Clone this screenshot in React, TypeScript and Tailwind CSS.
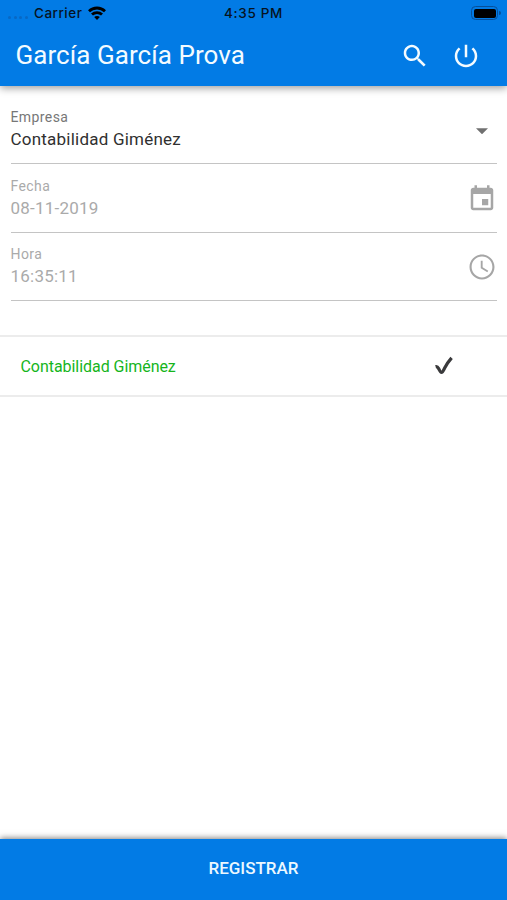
type FieldProps = {
  label: string;
  value: string;
  kind: "select" | "date" | "time";
};

function FieldIcon({ kind }: { kind: FieldProps["kind"] }) {
  if (kind === "select") {
    return (
      <svg viewBox="0 0 12 6" className="mt-[3px] mr-[8.5px] h-[6.5px] w-3" fill="#707070">
        <path d="M0 0h12L6 6z" />
      </svg>
    );
  }
  return (
    <svg viewBox="0 0 24 24" className="mt-[2px] -mr-[0.5px] size-[30px]" fill="#a6a6a6">
      {kind === "date" ? (
        <path d="M17 12h-5v5h5v-5zM16 1v2H8V1H6v2H5c-1.11 0-1.99.9-1.99 2L3 19c0 1.1.89 2 2 2h14c1.1 0 2-.9 2-2V5c0-1.1-.9-2-2-2h-1V1h-2zm3 18H5V8h14v11z" />
      ) : (
        <path d="M11.99 2C6.47 2 2 6.48 2 12s4.47 10 9.99 10C17.52 22 22 17.52 22 12S17.52 2 11.99 2zM12 20.3c-4.6 0-8.3-3.7-8.3-8.3s3.7-8.3 8.3-8.3 8.3 3.7 8.3 8.3-3.7 8.3-8.3 8.3zm.5-13.3H11v6l5.25 3.15.75-1.23-4.5-2.67V7z" />
      )}
    </svg>
  );
}

function Field({ label, value, kind }: FieldProps) {
  const active = kind === "select";
  return (
    <div className="flex h-[68.5px] items-center justify-between border-b border-[#c4c4c4]">
      <div className={active ? "text-[#303030]" : "text-[#aaaaaa]"}>
        <div
          className={`text-[14px] leading-[20px] tracking-[0.4px] ${active ? "text-[#777777]" : ""}`}
        >
          {label}
        </div>
        <div className="text-[17px] leading-6 tracking-[0.22px]">{value}</div>
      </div>
      <FieldIcon kind={kind} />
    </div>
  );
}

function StatusBar() {
  return (
    <div className="grid h-[26px] grid-cols-3 items-center font-[family-name:Inter] text-[13.5px] font-medium text-[#06131f]">
      <div className="flex items-center pl-2">
        <div className="mt-2 flex gap-[2.5px]">
          {[0, 1, 2, 3].map((i) => (
            <span key={i} className="size-[3px] rounded-full bg-[#0868c4]" />
          ))}
        </div>
        <span className="ml-[6.500px] w-[49px] tracking-[0.5px]">Carrier</span>
        <svg viewBox="0 0 18 14" className="ml-[5px] h-[14px] w-[18px]" fill="none" stroke="#000000" strokeWidth="2.8">
          <path d="M1 5.2C5.5.9 12.5.9 17 5.2" />
          <path d="M4 8.6c2.8-2.7 7.2-2.7 10 0" />
          <path d="M9 14 6.2 11.1c1.6-1.4 4-1.4 5.6 0z" fill="#000000" stroke="none" />
        </svg>
      </div>
      <div className="text-center tracking-[0.65px]">4:35 PM</div>
      <div className="flex items-center justify-end pr-[6px]">
        <div className="h-[14px] w-[27px] rounded-[4.5px] border border-[#07509a] p-[1.5px]">
          <div className="h-full rounded-[2px] bg-black" />
        </div>
        <div className="ml-px h-1 w-[2px] rounded-r-full bg-[#07509a]" />
      </div>
    </div>
  );
}

export default function App() {
  return (
    <div className="flex h-[900px] w-[507px] flex-col overflow-hidden bg-white font-['Roboto',sans-serif]">
      <header className="h-[86px] shrink-0 bg-[#027be5] shadow-[0_2px_8px_rgba(0,0,0,0.4)]">
        <StatusBar />
        <div className="flex h-[60px] items-center pr-[26px] pl-[15.5px] text-[#f4fbff]">
          <h1 className="flex-1 pb-[2px] text-[26px] leading-8 tracking-[0.06px]">García García Prova</h1>
          <svg viewBox="0 0 24 24" className="size-[30px]" fill="currentColor">
            <path d="M15.5 14h-.79l-.28-.27C15.41 12.59 16 11.11 16 9.5 16 5.91 13.09 3 9.5 3S3 5.91 3 9.5 5.91 16 9.5 16c1.61 0 3.09-.59 4.23-1.57l.27.28v.79l5 4.99L20.49 19l-4.99-5zm-6 0C7.01 14 5 11.99 5 9.5S7.01 5 9.5 5 14 7.01 14 9.5 11.99 14 9.5 14z" />
          </svg>
          <svg viewBox="0 0 24 24" className="ml-[21px] size-[30px]" fill="currentColor">
            <path d="M13 3h-2v10h2V3zm4.83 2.17-1.42 1.42C17.99 7.86 19 9.81 19 12c0 3.87-3.13 7-7 7s-7-3.13-7-7c0-2.19 1.01-4.14 2.58-5.42L6.17 5.17C4.23 6.82 3 9.26 3 12c0 4.97 4.03 9 9 9s9-4.03 9-9c0-2.74-1.23-5.18-3.17-6.83z" />
          </svg>
        </div>
      </header>

      <main className="flex-1">
        <form className="px-[10.5px] pt-[9.5px]">
          <Field label="Empresa" value="Contabilidad Giménez" kind="select" />
          <Field label="Fecha" value="08-11-2019" kind="date" />
          <Field label="Hora" value="16:35:11" kind="time" />
        </form>
        <div className="mt-[34px] flex h-[61.5px] items-center justify-between border-y-2 border-[#ececec] pr-[53px] pl-[20.5px]">
          <span className="mt-[2px] text-[16px] tracking-[-0.05px] text-[#16b51c]">Contabilidad Giménez</span>
          <svg viewBox="0 0 20 20" className="size-5" fill="none" stroke="#3a3a3c">
            <path d="M1.6 10.6c1.500-.4 2.300.5 3 1.900 1.100 2.200 1.600 3.900 2.900 3.900s2-2 3.300-4.600c1.700-3.400 4-6.700 6.800-9.900" strokeWidth="3.200" />
          </svg>
        </div>
      </main>

      <button className="h-[61px] shrink-0 bg-[#027be5] pb-[2px] text-[17px] font-medium text-[#ecf8ff] shadow-[0_-1px_6px_rgba(0,0,0,0.5)]">
        REGISTRAR
      </button>
    </div>
  );
}
